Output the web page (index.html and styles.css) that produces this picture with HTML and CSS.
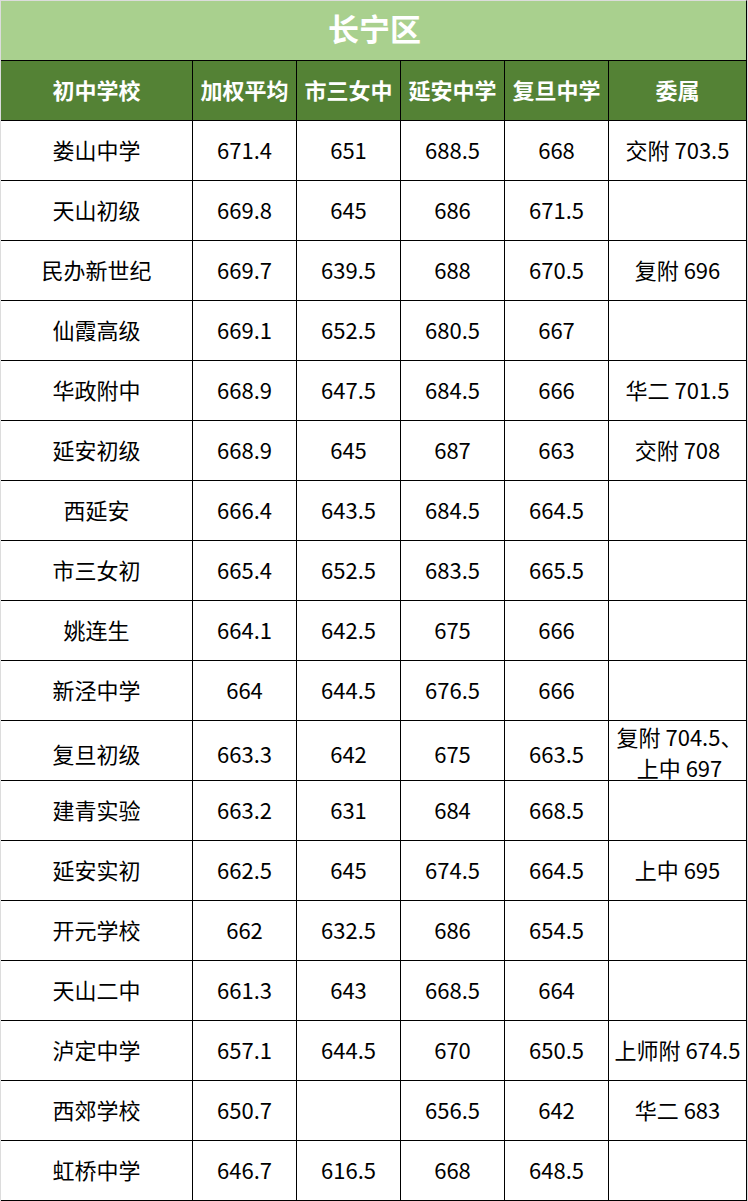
FILE: index.html
```html
<!DOCTYPE html>
<html lang="zh-CN">
<head>
<meta charset="utf-8">
<title>长宁区</title>
<link rel="stylesheet" href="styles.css">
</head>
<body>
<div class="sheet">
  <div class="title">长宁区</div>
  <div class="row head">
    <div class="c">初中学校</div><div class="c">加权平均</div><div class="c">市三女中</div><div class="c">延安中学</div><div class="c">复旦中学</div><div class="c">委属</div>
  </div>
  <div class="row"><div class="c">娄山中学</div><div class="c">671.4</div><div class="c">651</div><div class="c">688.5</div><div class="c">668</div><div class="c">交附 703.5</div></div>
  <div class="row"><div class="c">天山初级</div><div class="c">669.8</div><div class="c">645</div><div class="c">686</div><div class="c">671.5</div><div class="c"></div></div>
  <div class="row"><div class="c">民办新世纪</div><div class="c">669.7</div><div class="c">639.5</div><div class="c">688</div><div class="c">670.5</div><div class="c">复附 696</div></div>
  <div class="row"><div class="c">仙霞高级</div><div class="c">669.1</div><div class="c">652.5</div><div class="c">680.5</div><div class="c">667</div><div class="c"></div></div>
  <div class="row"><div class="c">华政附中</div><div class="c">668.9</div><div class="c">647.5</div><div class="c">684.5</div><div class="c">666</div><div class="c">华二 701.5</div></div>
  <div class="row"><div class="c">延安初级</div><div class="c">668.9</div><div class="c">645</div><div class="c">687</div><div class="c">663</div><div class="c">交附 708</div></div>
  <div class="row"><div class="c">西延安</div><div class="c">666.4</div><div class="c">643.5</div><div class="c">684.5</div><div class="c">664.5</div><div class="c"></div></div>
  <div class="row"><div class="c">市三女初</div><div class="c">665.4</div><div class="c">652.5</div><div class="c">683.5</div><div class="c">665.5</div><div class="c"></div></div>
  <div class="row"><div class="c">姚连生</div><div class="c">664.1</div><div class="c">642.5</div><div class="c">675</div><div class="c">666</div><div class="c"></div></div>
  <div class="row"><div class="c">新泾中学</div><div class="c">664</div><div class="c">644.5</div><div class="c">676.5</div><div class="c">666</div><div class="c"></div></div>
  <div class="row"><div class="c">复旦初级</div><div class="c">663.3</div><div class="c">642</div><div class="c">675</div><div class="c">663.5</div><div class="c two">复附 704.5、<br>上中 697</div></div>
  <div class="row"><div class="c">建青实验</div><div class="c">663.2</div><div class="c">631</div><div class="c">684</div><div class="c">668.5</div><div class="c"></div></div>
  <div class="row"><div class="c">延安实初</div><div class="c">662.5</div><div class="c">645</div><div class="c">674.5</div><div class="c">664.5</div><div class="c">上中 695</div></div>
  <div class="row"><div class="c">开元学校</div><div class="c">662</div><div class="c">632.5</div><div class="c">686</div><div class="c">654.5</div><div class="c"></div></div>
  <div class="row"><div class="c">天山二中</div><div class="c">661.3</div><div class="c">643</div><div class="c">668.5</div><div class="c">664</div><div class="c"></div></div>
  <div class="row"><div class="c">泸定中学</div><div class="c">657.1</div><div class="c">644.5</div><div class="c">670</div><div class="c">650.5</div><div class="c">上师附 674.5</div></div>
  <div class="row"><div class="c">西郊学校</div><div class="c">650.7</div><div class="c"></div><div class="c">656.5</div><div class="c">642</div><div class="c">华二 683</div></div>
  <div class="row last"><div class="c">虹桥中学</div><div class="c">646.7</div><div class="c">616.5</div><div class="c">668</div><div class="c">648.5</div><div class="c"></div></div>
</div>
</body>
</html>
```

FILE: styles.css
```css
html, body {
  margin: 0;
  padding: 0;
  background: #dcdcdc;
}
.sheet {
  margin-left: 1px;
  width: 746px;
  font-family: "Noto Sans CJK SC", "Noto Sans", sans-serif;
  color: #000;
  background: #fff;
}
.title {
  box-sizing: border-box;
  height: 61px;
  border-top: 1px solid #dcdcdc;
  border-right: 1px solid #000;
  border-bottom: 1px solid #000;
  background: #a9d08e;
  color: #fff;
  font-weight: 700;
  font-size: 31px;
  display: flex;
  align-items: center;
  justify-content: center;
  padding-left: 2px;
  padding-bottom: 6px;
}
.row {
  display: grid;
  grid-template-columns: 192px 104px 104px 104px 104px 138px;
  height: 60px;
  box-sizing: border-box;
  border-bottom: 1px solid #000;
}
.row.last {
  height: 61px;
  border-bottom-width: 2px;
}
.c {
  box-sizing: border-box;
  border-right: 1px solid #000;
  display: flex;
  align-items: center;
  justify-content: center;
  text-align: center;
  font-size: 22px;
  white-space: nowrap;
  padding-bottom: 4px;
}
.head {
  background: #548235;
}
.head .c {
  color: #fff;
  font-weight: 700;
  font-size: 22px;
}
.c.two {
  line-height: 31px;
  padding-left: 4px;
  padding-bottom: 5px;
}
```
